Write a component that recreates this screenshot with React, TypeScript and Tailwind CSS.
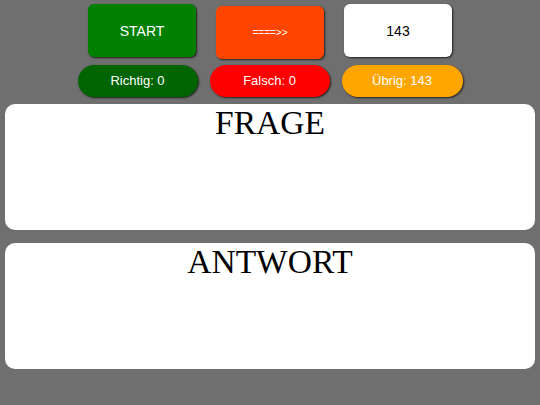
import React from 'react';

const sans = "font-['Liberation_Sans',Arial,sans-serif]";
const serif = "font-['Liberation_Serif','Times_New_Roman',serif]";

const App: React.FC = () => {
  return (
    <div className={`w-[540px] h-[405px] bg-[#6f6f6f] overflow-hidden ${sans}`}>
      {/* Top buttons */}
      <div className="flex justify-center items-start gap-5 pt-1">
        <button className="w-[108px] h-[53px] pt-px rounded-md bg-[#008000] text-white text-[14px] shadow-[1px_1px_2px_rgba(0,0,0,0.7)]">
          START
        </button>
        <button className="w-[108px] h-[53px] mt-[2px] rounded-md bg-[#ff4500] text-white text-[10px] shadow-[1px_1px_2px_rgba(0,0,0,0.7)]">
          ====&gt;&gt;
        </button>
        <div className="w-[108px] h-[53px] pt-px rounded-md bg-white text-black text-[14px] flex items-center justify-center shadow-[1px_1px_2px_rgba(0,0,0,0.7)]">
          143
        </div>
      </div>

      {/* Counters */}
      <div className="flex justify-center gap-3 mt-[6px]">
        <div className="w-[120px] h-[32px] rounded-full bg-[#006400] text-white text-[13px] flex items-center justify-center shadow-[1px_1px_2px_rgba(0,0,0,0.7)]">
          Richtig: 0
        </div>
        <div className="w-[120px] h-[32px] rounded-full bg-[#ff0000] text-white text-[13px] flex items-center justify-center shadow-[1px_1px_2px_rgba(0,0,0,0.7)]">
          Falsch: 0
        </div>
        <div className="w-[121px] h-[32px] rounded-full bg-[#ffa500] text-white text-[13px] flex items-center justify-center shadow-[1px_1px_2px_rgba(0,0,0,0.7)]">
          Übrig: 143
        </div>
      </div>

      {/* Cards */}
      <div className="flex flex-col gap-[13px] px-[5px] mt-[7px]">
        <div className={`h-[126px] bg-white rounded-[10px] text-center text-black text-[33.5px] leading-[1.15] ${serif}`}>
          FRAGE
        </div>
        <div className={`h-[126px] bg-white rounded-[10px] text-center text-black text-[33.5px] leading-[1.15] ${serif}`}>
          ANTWORT
        </div>
      </div>
    </div>
  );
};

export default App;
